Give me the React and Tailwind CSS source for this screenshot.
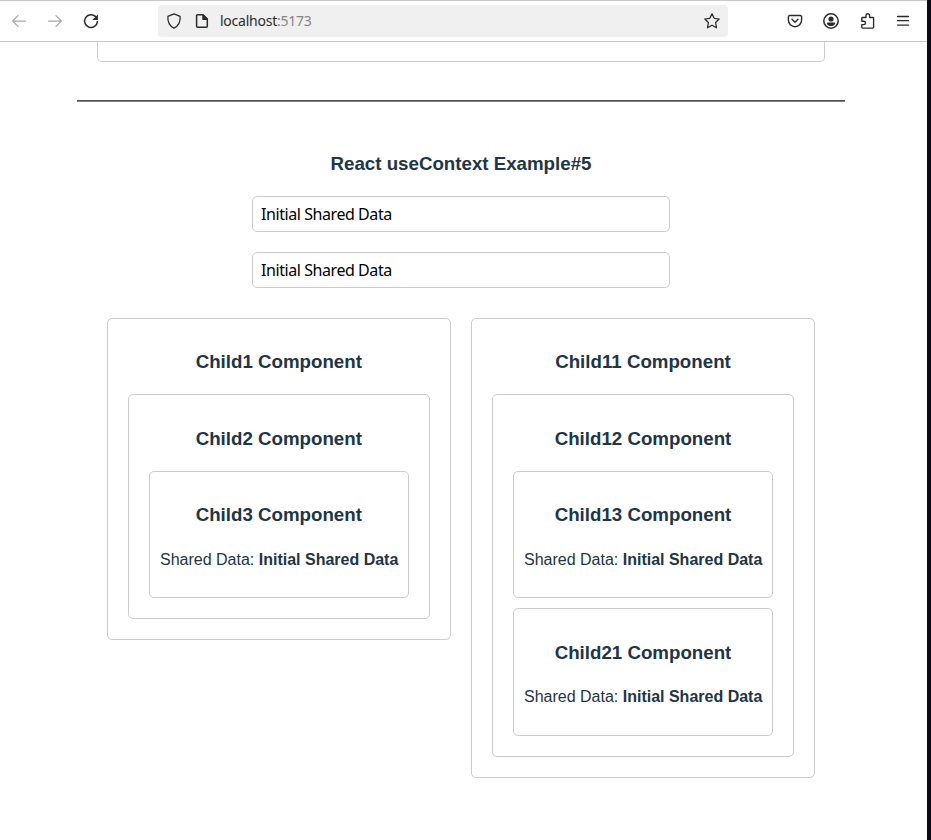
import React, { useState } from "react";

function Icon({ children, className = "" }) {
  return (
    <svg
      viewBox="0 0 16 16"
      fill="none"
      stroke="currentColor"
      strokeWidth="1.25"
      strokeLinecap="round"
      strokeLinejoin="round"
      className={`size-4 shrink-0 ${className}`}
    >
      {children}
    </svg>
  );
}

function Toolbar() {
  return (
    <header className="flex h-[42px] shrink-0 items-center border-y border-[#c8c8c8] pl-[11px] text-[#2b2b2b]">
      <Icon className="text-[#a9a9a9]">
        <path d="M14.5 8H1.6M7 2.6L1.6 8L7 13.4" />
      </Icon>
      <Icon className="ml-5 text-[#a9a9a9]">
        <path d="M1.5 8h12.9M9 2.6L14.4 8L9 13.4" />
      </Icon>
      <Icon className="ml-5">
        <path strokeWidth="1.5" d="M12.4 3.4A6.4 6.4 0 1 0 14.4 8.6" />
        <path fill="currentColor" stroke="none" d="M14.9 1.5v5.2a.4.4 0 0 1-.4.4H9.3z" />
      </Icon>
      <div className="ml-[59px] flex h-8 w-[570px] items-center rounded bg-[#f0f0f0] px-2">
        <Icon>
          <path d="M8 .9L14.1 3.3C14.5 8.1 12.5 13 8 15.1C3.5 13 1.5 8.1 1.9 3.3z" />
        </Icon>
        <Icon className="ml-3">
          <path strokeWidth="1.5" d="M3.5 1.8H9L13.3 6V13.3a.9.9 0 0 1-.9.9H3.5a.9.9 0 0 1-.9-.9V2.7a.9.9 0 0 1 .9-.9z" />
          <path fill="currentColor" stroke="none" d="M8.3 1.5h1.2L13.8 5.8v1.3H9.2a.9.9 0 0 1-.9-.9z" />
        </Icon>
        <span className="mb-[2px] ml-[10px] font-['Noto_Sans',sans-serif] text-[14px] tracking-[-0.24px] text-[#2b2b2b]">
          localhost<span className="text-[#858585]">:5173</span>
        </span>
        <Icon className="ml-auto">
          <path d="M8 .9L10.2 5.3L15.2 6L11.6 9.5L12.5 14.8L8 12.3L3.5 14.8L4.4 9.5L.8 6L5.8 5.3z" />
        </Icon>
      </div>
      <Icon className="ml-[59px]">
        <path strokeWidth="1.4" d="M2.7 2.5H13.3A1.3 1.3 0 0 1 14.6 3.8V7.1A6.6 6.6 0 0 1 1.4 7.1V3.8A1.3 1.3 0 0 1 2.7 2.5z" />
        <path strokeWidth="1.4" d="M5 6.3L8 9.2L11 6.3" />
      </Icon>
      <Icon className="ml-5">
        <circle cx="8" cy="8" r="7.2" strokeWidth="1.5" />
        <circle cx="8" cy="6" r="2.6" fill="currentColor" stroke="none" />
        <path fill="currentColor" stroke="none" d="M5 9.6h6a1.2 1.2 0 0 1 1.2 1.2c-.9 1.5-2.4 2.3-4.2 2.3s-3.3-.8-4.2-2.3A1.2 1.2 0 0 1 5 9.6z" />
      </Icon>
      <Icon className="ml-5">
        <path
          strokeWidth="1.35"
          d="M7 4.5V2.4A1.8 1.7 0 0 1 10.6 2.4V4.5H13.8A.8.8 0 0 1 14.6 5.3V14.3A.8.8 0 0 1 13.8 15.1H3.6A.8.8 0 0 1 2.8 14.3V11.6H4.8A1.7 1.7 0 0 0 4.8 8.2H2.8V5.3A.8.8 0 0 1 3.6 4.5z"
        />
      </Icon>
      <Icon className="ml-5">
        <path strokeWidth="1.3" d="M2.5 3.5h11M2.5 7.7h11M2.5 12.1h11" />
      </Icon>
    </header>
  );
}

function Box({ title, children, className = "" }) {
  return (
    <section className={`rounded-[5px] border border-[#ccc] p-[10px] ${className}`}>
      <h3 className="mt-[19.42px] mb-[18.02px] text-center text-[18.72px] leading-[28.08px] font-bold">
        {title}
      </h3>
      {children}
    </section>
  );
}

function SharedBox({ title, value }) {
  return (
    <Box title={title}>
      <p className="mb-[15.8px] pt-[0.2px] text-center text-base leading-6 whitespace-nowrap">
        Shared Data: <b>{value}</b>
      </p>
    </Box>
  );
}

function SharedInput({ value, onChange }) {
  return (
    <input
      value={value}
      onChange={(e) => onChange(e.target.value)}
      className="h-9 w-[418px] rounded-[5px] border border-[#ccc] px-2 font-['Noto_Sans',sans-serif] text-[16px] tracking-[-0.43px] text-black"
    />
  );
}

export default function App() {
  const [data, setData] = useState("Initial Shared Data");
  return (
    <div className="flex h-[840px] overflow-hidden bg-white font-['Liberation_Sans',Arial,sans-serif] text-[#213547]">
      <div className="flex w-[927px] flex-col">
        <Toolbar />
        <main className="ml-[77px] w-[768px]">
          <div className="mx-5 h-5 rounded-b-[5px] border border-t-0 border-[#ccc]" />
          <hr className="mt-[38px] border-y border-t-[#555257] border-b-[#7d7b80]" />
          <h3 className="mt-[48px] text-center text-[18.72px] leading-[28.08px] font-bold">
            React useContext Example#5
          </h3>
          <div className="mt-[17.92px] flex flex-col items-center gap-5">
            <SharedInput value={data} onChange={setData} />
            <SharedInput value={data} onChange={setData} />
          </div>
          <div className="mx-[30px] mt-[29.88px] flex items-start gap-[20.4px]">
            <Box title="Child1 Component" className="w-[343.6px] shrink-0">
              <Box title="Child2 Component" className="m-[10px]">
                <div className="m-[10px]">
                  <SharedBox title="Child3 Component" value={data} />
                </div>
              </Box>
            </Box>
            <Box title="Child11 Component" className="w-[344px] shrink-0">
              <Box title="Child12 Component" className="m-[10px]">
                <div className="m-[10px] flex flex-col gap-[10px]">
                  <SharedBox title="Child13 Component" value={data} />
                  <SharedBox title="Child21 Component" value={data} />
                </div>
              </Box>
            </Box>
          </div>
        </main>
      </div>
      <div className="w-1 bg-[#0b0a14]" />
    </div>
  );
}
